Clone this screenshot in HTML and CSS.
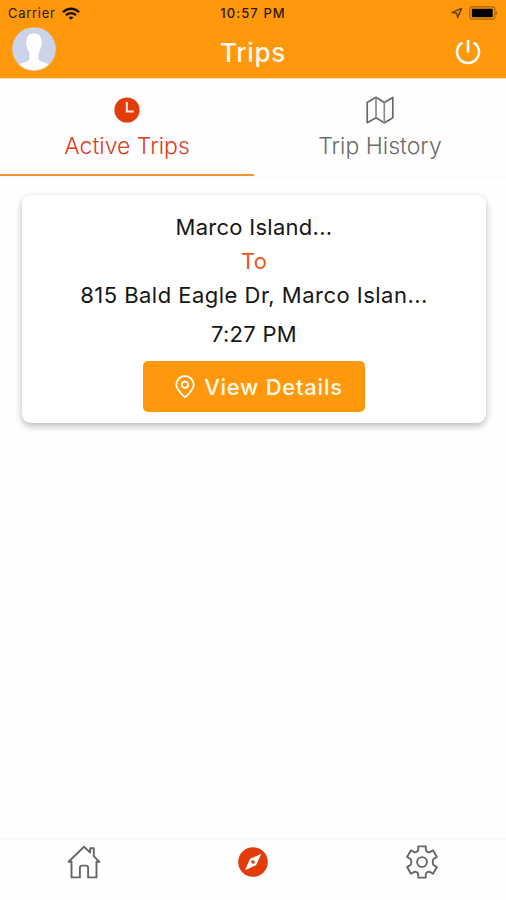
FILE: index.html
```
<!DOCTYPE html>
<html lang="en">
<head>
    <meta charset="UTF-8">
    <meta name="viewport" content="width=device-width, initial-scale=1.0">
    <title>Trips</title>
    <link rel="stylesheet" href="styles.css">
</head>
<body>
    <header class="header">
        <div class="status-bar">
            <div class="status-left">
                <span class="carrier">Carrier</span>
                <svg width="18" height="13" viewBox="0 0 18 13" fill="none" stroke="#1c1000" stroke-width="2.3">
                    <path d="M1 5.2C5.4.6 12.6.6 17 5.2M4 8.2c2.8-2.8 7.2-2.8 10 0"/>
                    <path d="M6.6 10.4c1.4-1.3 3.4-1.3 4.8 0L9 12.8z" fill="#1c1000" stroke="none"/>
                </svg>
            </div>
            <span class="clock">10:57 PM</span>
            <div class="status-right">
                <svg width="12" height="12" viewBox="0 0 12 12" fill="none" stroke="#6b4300" stroke-width="1.5" stroke-linejoin="round">
                    <path d="M10.6 1.4 1.2 5.4l4.6.8.8 4.4z"/>
                </svg>
                <svg width="29" height="14" viewBox="0 0 29 14">
                    <rect x=".7" y=".7" width="25.2" height="12.6" rx="3" fill="none" stroke="#b66d06" stroke-width="1.4"/>
                    <rect x="2.8" y="2.8" width="21" height="8.4" rx="1" fill="#000"/>
                    <path d="M27 4.6c1.8.8 1.8 4 0 4.8z" fill="#b66d06"/>
                </svg>
            </div>
        </div>
        <div class="title-bar">
            <svg class="avatar" width="44" height="44" viewBox="0 0 44 44">
                <circle cx="22" cy="22" r="21.8" fill="#cbd3e8"/>
                <path d="M22 6.500c-5.400 0-7.900 3.800-7.600 9-.9.600-.5 3.600.8 4.600.4 2.600 1.200 4.400 2.300 5.700v6c-.8 3.400-6.600 3.400-10.200 5.800a21.800 21.800 0 0 0 29.400 0c-3.600-2.400-9.400-2.400-10.200-5.800v-6c1.100-1.300 1.900-3.100 2.300-5.700 1.300-1 1.700-4 .8-4.600.3-5.200-2.200-9-7.600-9z" fill="#fff"/>
            </svg>
            <h1 class="title">Trips</h1>
            <svg class="power" width="26" height="26" viewBox="0 0 26 26" fill="none" stroke="#fff" stroke-width="2.6">
                <path d="M13 1v12.500M7.400 3.600a11 11 0 1 0 11.200 0"/>
            </svg>
        </div>
    </header>

    <div class="tabs">
        <div class="tab active">
            <svg width="28" height="28" viewBox="0 0 28 28">
                <circle cx="14" cy="14" r="12.600" fill="#e23c0a"/>
                <path d="M13.800 6v9.500h7" fill="none" stroke="#ffe9e0" stroke-width="2"/>
            </svg>
            <span>Active Trips</span>
        </div>
        <div class="tab">
            <svg width="28" height="28" viewBox="0 0 28 28" fill="none" stroke="#686868" stroke-width="1.700" stroke-linejoin="round">
                <path d="M1.200 6.500 10 1.200l8.300 5.300 8.500-5v20.200l-8.500 5.200-8.300-5.200-8.800 5z"/>
                <path d="M10 1.200v20.500M18.300 6.500v20.400" stroke="#8c8c8c"/>
            </svg>
            <span>Trip History</span>
        </div>
    </div>

    <main class="content">
        <div class="card">
            <p class="from">Marco Island...</p>
            <p class="to">To</p>
            <p class="address">815 Bald Eagle Dr, Marco Islan...</p>
            <p class="time">7:27 PM</p>
            <button class="details">
                <svg width="20" height="24" viewBox="0 0 20 24" fill="none" stroke="#fff" stroke-width="1.800" stroke-linejoin="round">
                    <path d="M10 22.400C6 18.600 1.300 14.500 1.300 9.700a8.700 8.700 0 0 1 17.400 0c0 4.800-4.700 8.900-8.700 12.700z"/>
                    <circle cx="10" cy="9.800" r="3.100"/>
                </svg>
                <span>View Details</span>
            </button>
        </div>
    </main>

    <nav class="bottom-nav">
        <svg width="34" height="34" viewBox="0 0 34 34" fill="none" stroke="#666" stroke-width="1.900" stroke-linejoin="round">
            <path d="M4.500 16.800H1.600L17 1.800l6.200 5.800V3.200h3.600v7.900l5.600 5.700h-2.900v15.600h-8.400V22.600q0-2-2-2h-4.200q-2 0-2 2v9.800H4.500z"/>
        </svg>
        <svg width="32" height="32" viewBox="0 0 32 32">
            <circle cx="16" cy="16" r="14.800" fill="#e23c0a"/>
            <path d="M24.200 8 19 19.200 8 24.200l5-11.400z" fill="#fff"/>
            <circle cx="16" cy="16" r="1.800" fill="#e23c0a"/>
        </svg>
        <svg width="34" height="34" viewBox="0 0 34 34" fill="none" stroke="#666" stroke-width="1.900" stroke-linejoin="round">
            <path d="M13.200 1.400h7.600v3.100q0 1.600 1.500 2.300 1.500.9 2.900.1l2.800-1.600 3.900 6.600-2.700 1.600q-1.400.8-1.400 2.400v2.200q0 1.600 1.400 2.400l2.700 1.600-3.900 6.600-2.800-1.600q-1.400-.8-2.900.1-1.500.7-1.500 2.300v3.100h-7.600v-3.100q0-1.600-1.500-2.300-1.500-.9-2.900-.1L6 28.700l-3.900-6.600 2.700-1.600q1.400-.8 1.400-2.400v-2.200q0-1.600-1.400-2.400l-2.700-1.600L6 5.300l2.800 1.600q1.400.8 2.900-.1 1.500-.7 1.500-2.300z"/>
            <circle cx="17" cy="17" r="4.900"/>
        </svg>
    </nav>
</body>
</html>
```
FILE: styles.css
```
* {
    box-sizing: border-box;
}

body {
    margin: 0;
    height: 900px;
    display: flex;
    flex-direction: column;
    font-family: Inter, "Liberation Sans", sans-serif;
    background-color: #fefefe;
    overflow: hidden;
}

svg {
    display: block;
    flex-shrink: 0;
}

.header {
    height: 79px;
    background-color: #ff980a;
    border-bottom: 1px solid #ffd9b0;
}

.status-bar {
    display: grid;
    grid-template-columns: 1fr auto 1fr;
    align-items: center;
    height: 26px;
    padding: 0 8px;
    font-size: 13px;
    color: #2b1900;
}

.status-left, .status-right {
    display: flex;
    align-items: center;
    gap: 6px;
}

.status-right {
    justify-content: flex-end;
}

.carrier {
    letter-spacing: 0.7px;
}

.clock {
    font-weight: 500;
    letter-spacing: 1.1px;
}

.title-bar {
    display: grid;
    grid-template-columns: 1fr auto 1fr;
    align-items: center;
    height: 52px;
    padding: 0 12px;
}

.avatar {
    margin-bottom: 6px;
}

.title {
    margin: 0;
    font-size: 26px;
    font-weight: 500;
    letter-spacing: 0.7px;
    color: #fff8ec;
}

.power {
    justify-self: end;
    margin-right: 13px;
}

.tabs {
    display: grid;
    grid-template-columns: 254px 252px;
    height: 99px;
    border-bottom: 1px solid #f8f8f8;
}

.tab {
    display: flex;
    flex-direction: column;
    align-items: center;
    gap: 8px;
    height: 97px;
    padding-top: 17px;
    font-size: 23px;
    line-height: 28px;
    font-weight: 300;
    color: #6c6c6c;
}

.tab.active {
    color: #dc3d1d;
    border-bottom: 2px solid #fa922a;
}

.content {
    flex: 1;
    padding: 17px 20px 0 22px;
}

.card {
    display: flex;
    flex-direction: column;
    align-items: center;
    height: 228px;
    padding-top: 15px;
    border-radius: 9px;
    background-color: #fff;
    box-shadow: 0 3px 7px rgba(0, 0, 0, 0.27);
    font-size: 22px;
    color: #161616;
}

.card p {
    margin: 0;
    line-height: 34px;
    letter-spacing: 0.28px;
}

.card .to {
    color: #ed571c;
}

.card .address {
    letter-spacing: 0.48px;
}

.card .time {
    margin-top: 5px;
}

.details {
    display: flex;
    align-items: center;
    justify-content: center;
    gap: 9px;
    width: 222px;
    height: 51px;
    margin-top: 10px;
    padding: 0 0 0 10px;
    border: none;
    border-radius: 5px;
    background-color: #ff980a;
    font-family: inherit;
    font-size: 22px;
    font-weight: 500;
    letter-spacing: 0.75px;
    color: #fff8ec;
}

.bottom-nav {
    display: grid;
    grid-template-columns: repeat(3, 1fr);
    justify-items: center;
    align-items: center;
    height: 62px;
    padding-bottom: 17px;
    border-top: 2px solid #f8f8f8;
}
```
